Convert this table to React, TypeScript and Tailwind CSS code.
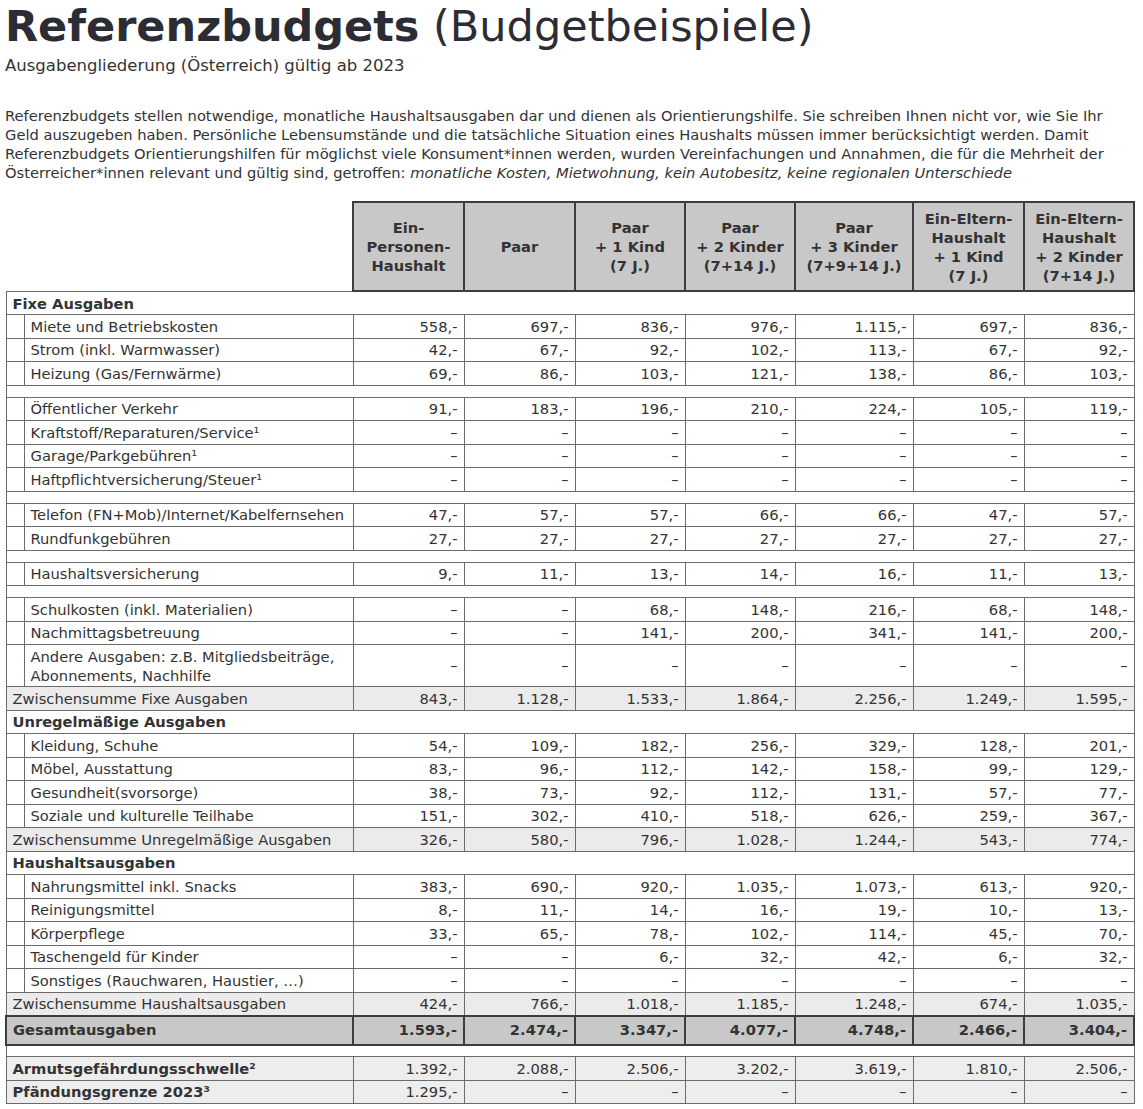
import React from 'react';

type Row =
  | { kind: 'section'; label: string }
  | { kind: 'spacer' }
  | { kind: 'item'; label: React.ReactNode; values: string[]; tall?: boolean }
  | { kind: 'subtotal'; label: string; values: string[] }
  | { kind: 'total'; label: string; values: string[] }
  | { kind: 'extra'; label: string; values: string[] };

const D = '–';
const all = (v: string) => Array(7).fill(v);

const columns = [
  ['Ein-', 'Personen-', 'Haushalt'],
  ['Paar'],
  ['Paar', '+ 1 Kind', '(7 J.)'],
  ['Paar', '+ 2 Kinder', '(7+14 J.)'],
  ['Paar', '+ 3 Kinder', '(7+9+14 J.)'],
  ['Ein-Eltern-', 'Haushalt', '+ 1 Kind', '(7 J.)'],
  ['Ein-Eltern-', 'Haushalt', '+ 2 Kinder', '(7+14 J.)'],
];

const rows: Row[] = [
  { kind: 'section', label: 'Fixe Ausgaben' },
  { kind: 'item', label: 'Miete und Betriebskosten', values: ['558', '697', '836', '976', '1.115', '697', '836'] },
  { kind: 'item', label: 'Strom (inkl. Warmwasser)', values: ['42', '67', '92', '102', '113', '67', '92'] },
  { kind: 'item', label: 'Heizung (Gas/Fernwärme)', values: ['69', '86', '103', '121', '138', '86', '103'] },
  { kind: 'spacer' },
  { kind: 'item', label: 'Öffentlicher Verkehr', values: ['91', '183', '196', '210', '224', '105', '119'] },
  { kind: 'item', label: 'Kraftstoff/Reparaturen/Service¹', values: all(D) },
  { kind: 'item', label: 'Garage/Parkgebühren¹', values: all(D) },
  { kind: 'item', label: 'Haftpflichtversicherung/Steuer¹', values: all(D) },
  { kind: 'spacer' },
  { kind: 'item', label: 'Telefon (FN+Mob)/Internet/Kabelfernsehen', values: ['47', '57', '57', '66', '66', '47', '57'] },
  { kind: 'item', label: 'Rundfunkgebühren', values: all('27') },
  { kind: 'spacer' },
  { kind: 'item', label: 'Haushaltsversicherung', values: ['9', '11', '13', '14', '16', '11', '13'] },
  { kind: 'spacer' },
  { kind: 'item', label: 'Schulkosten (inkl. Materialien)', values: [D, D, '68', '148', '216', '68', '148'] },
  { kind: 'item', label: 'Nachmittagsbetreuung', values: [D, D, '141', '200', '341', '141', '200'] },
  {
    kind: 'item',
    label: (
      <>
        Andere Ausgaben: z.B. Mitgliedsbeiträge,
        <br />
        Abonnements, Nachhilfe
      </>
    ),
    values: all(D),
    tall: true,
  },
  { kind: 'subtotal', label: 'Zwischensumme Fixe Ausgaben', values: ['843', '1.128', '1.533', '1.864', '2.256', '1.249', '1.595'] },
  { kind: 'section', label: 'Unregelmäßige Ausgaben' },
  { kind: 'item', label: 'Kleidung, Schuhe', values: ['54', '109', '182', '256', '329', '128', '201'] },
  { kind: 'item', label: 'Möbel, Ausstattung', values: ['83', '96', '112', '142', '158', '99', '129'] },
  { kind: 'item', label: 'Gesundheit(svorsorge)', values: ['38', '73', '92', '112', '131', '57', '77'] },
  { kind: 'item', label: 'Soziale und kulturelle Teilhabe', values: ['151', '302', '410', '518', '626', '259', '367'] },
  { kind: 'subtotal', label: 'Zwischensumme Unregelmäßige Ausgaben', values: ['326', '580', '796', '1.028', '1.244', '543', '774'] },
  { kind: 'section', label: 'Haushaltsausgaben' },
  { kind: 'item', label: 'Nahrungsmittel inkl. Snacks', values: ['383', '690', '920', '1.035', '1.073', '613', '920'] },
  { kind: 'item', label: 'Reinigungsmittel', values: ['8', '11', '14', '16', '19', '10', '13'] },
  { kind: 'item', label: 'Körperpflege', values: ['33', '65', '78', '102', '114', '45', '70'] },
  { kind: 'item', label: 'Taschengeld für Kinder', values: [D, D, '6', '32', '42', '6', '32'] },
  { kind: 'item', label: 'Sonstiges (Rauchwaren, Haustier, …)', values: all(D) },
  { kind: 'subtotal', label: 'Zwischensumme Haushaltsausgaben', values: ['424', '766', '1.018', '1.185', '1.248', '674', '1.035'] },
  { kind: 'total', label: 'Gesamtausgaben', values: ['1.593', '2.474', '3.347', '4.077', '4.748', '2.466', '3.404'] },
  { kind: 'spacer' },
  { kind: 'extra', label: 'Armutsgefährdungsschwelle²', values: ['1.392', '2.088', '2.506', '3.202', '3.619', '1.810', '2.506'] },
  { kind: 'extra', label: 'Pfändungsgrenze 2023³', values: ['1.295', D, D, D, D, D, D] },
];

const fmt = (v: string) => (v === D ? D : `${v},-`);

const cell = 'border border-[#6b6b6b] h-[23.5px] py-0 leading-[19px]';
const num = `${cell} text-right pr-[6px]`;

export default function App() {
  return (
    <div className="bg-white text-[#333] font-['DejaVu_Sans',sans-serif] text-[14.7px] w-[1143px] min-h-[1109px]">
      <div className="px-[5px] pt-[1px]">
        <h1 className="text-[43px] leading-[50px] text-[#2c2c34]">
          <span className="font-bold">Referenzbudgets</span> (Budgetbeispiele)
        </h1>
        <p className="text-[16.5px] leading-[20px] mt-[5px]">Ausgabengliederung (Österreich) gültig ab 2023</p>
        <p className="leading-[19px] mt-[30px] mb-[19px]">
          Referenzbudgets stellen notwendige, monatliche Haushaltsausgaben dar und dienen als Orientierungshilfe. Sie
          schreiben Ihnen nicht vor, wie Sie Ihr
          <br />
          Geld auszugeben haben. Persönliche Lebensumstände und die tatsächliche Situation eines Haushalts müssen immer
          berücksichtigt werden. Damit
          <br />
          Referenzbudgets Orientierungshilfen für möglichst viele Konsument*innen werden, wurden Vereinfachungen und
          Annahmen, die für die Mehrheit der
          <br />
          Österreicher*innen relevant und gültig sind, getroffen:{' '}
          <i>monatliche Kosten, Mietwohnung, kein Autobesitz, keine regionalen Unterschiede</i>
        </p>

        <table className="border-collapse table-fixed w-[1128px]">
          <colgroup>
            <col className="w-[18px]" />
            <col className="w-[329px]" />
            <col className="w-[111px]" />
            <col className="w-[111px]" />
            <col className="w-[110px]" />
            <col className="w-[110px]" />
            <col className="w-[118px]" />
            <col className="w-[111px]" />
            <col className="w-[110px]" />
          </colgroup>
          <thead>
            <tr className="h-[89px]">
              <th colSpan={2} className="border-b border-[#6b6b6b]"></th>
              {columns.map((lines, i) => (
                <th
                  key={i}
                  className="border-2 border-[#3d3d3d] bg-[#c8c8c8] font-bold text-center align-middle leading-[19px] px-0 text-[#333] text-[14.7px]"
                >
                  {lines.map((l, j) => (
                    <div key={j} className="whitespace-nowrap">
                      {l}
                    </div>
                  ))}
                </th>
              ))}
            </tr>
          </thead>
          <tbody>
            {rows.map((r, i) => {
              if (r.kind === 'section')
                return (
                  <tr key={i}>
                    <td colSpan={9} className={`${cell} font-bold pl-[6px] h-[22px]`}>
                      {r.label}
                    </td>
                  </tr>
                );
              if (r.kind === 'spacer')
                return (
                  <tr key={i}>
                    <td colSpan={9} className="border border-[#6b6b6b] h-[12px] p-0"></td>
                  </tr>
                );
              if (r.kind === 'item')
                return (
                  <tr key={i}>
                    <td className={cell}></td>
                    <td className={`${cell} pl-[6px] whitespace-nowrap ${r.tall ? 'h-[42px]' : ''}`}>{r.label}</td>
                    {r.values.map((v, j) => (
                      <td key={j} className={num}>
                        {fmt(v)}
                      </td>
                    ))}
                  </tr>
                );
              if (r.kind === 'subtotal')
                return (
                  <tr key={i} className="bg-[#ebebeb]">
                    <td colSpan={2} className={`${cell} pl-[6px] whitespace-nowrap`}>
                      {r.label}
                    </td>
                    {r.values.map((v, j) => (
                      <td key={j} className={num}>
                        {fmt(v)}
                      </td>
                    ))}
                  </tr>
                );
              if (r.kind === 'total')
                return (
                  <tr key={i} className="bg-[#c8c8c8] font-bold">
                    <td colSpan={2} className="border-2 border-[#3d3d3d] h-[29px] py-0 pl-[6px]">
                      {r.label}
                    </td>
                    {r.values.map((v, j) => (
                      <td key={j} className="border-2 border-[#3d3d3d] h-[29px] py-0 text-right pr-[6px]">
                        {fmt(v)}
                      </td>
                    ))}
                  </tr>
                );
              return (
                <tr key={i} className="bg-[#ededed]">
                  <td colSpan={2} className={`${cell} pl-[6px] font-bold`}>
                    {r.label}
                  </td>
                  {r.values.map((v, j) => (
                    <td key={j} className={num}>
                      {fmt(v)}
                    </td>
                  ))}
                </tr>
              );
            })}
          </tbody>
        </table>
      </div>
    </div>
  );
}
